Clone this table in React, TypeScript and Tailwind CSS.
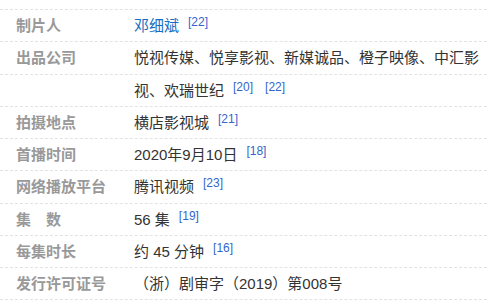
import React from "react";

type Row = { label: string; value: React.ReactNode; refs?: string[] };

const Ref = ({ n, first }: { n: string; first?: boolean }) => (
  <sup
    className={`relative top-[-5px] align-baseline text-[12px] leading-none text-[#3366cc] ${
      first ? "ml-[9px]" : "ml-[12px]"
    }`}
  >
    [{n}]
  </sup>
);

const rows: Row[] = [
  {
    label: "制片人",
    value: <span className="text-[#136ec2]">邓细斌</span>,
    refs: ["22"],
  },
  { label: "出品公司", value: "悦视传媒、悦享影视、新媒诚品、橙子映像、中汇影" },
  { label: "", value: "视、欢瑞世纪", refs: ["20", "22"] },
  { label: "拍摄地点", value: "横店影视城", refs: ["21"] },
  { label: "首播时间", value: "2020年9月10日", refs: ["18"] },
  { label: "网络播放平台", value: "腾讯视频", refs: ["23"] },
  { label: "集　数", value: "56 集", refs: ["19"] },
  { label: "每集时长", value: "约 45 分钟", refs: ["16"] },
  { label: "发行许可证号", value: "（浙）剧审字（2019）第008号" },
];

export default function App() {
  return (
    <div
      className="w-[487px] h-[302px] overflow-hidden bg-white pt-[9px]"
      style={{ fontFamily: '"Liberation Sans", Arial, "Noto Sans CJK SC", sans-serif' }}
    >
      <div className="border-t border-dashed border-[#e2e2e2]">
        {rows.map((r, i) => (
          <div
            key={i}
            className="flex h-[32.25px] items-center border-b border-dashed border-[#e2e2e2] text-[15px] leading-none"
          >
            <div className="w-[134px] shrink-0 pl-[16px] font-bold text-[#999999] whitespace-nowrap">
              {r.label}
            </div>
            <div className="flex-1 whitespace-nowrap text-[#333333]">
              {r.value}
              {r.refs?.map((n, j) => (
                <Ref key={n + j} n={n} first={j === 0} />
              ))}
            </div>
          </div>
        ))}
      </div>
    </div>
  );
}
